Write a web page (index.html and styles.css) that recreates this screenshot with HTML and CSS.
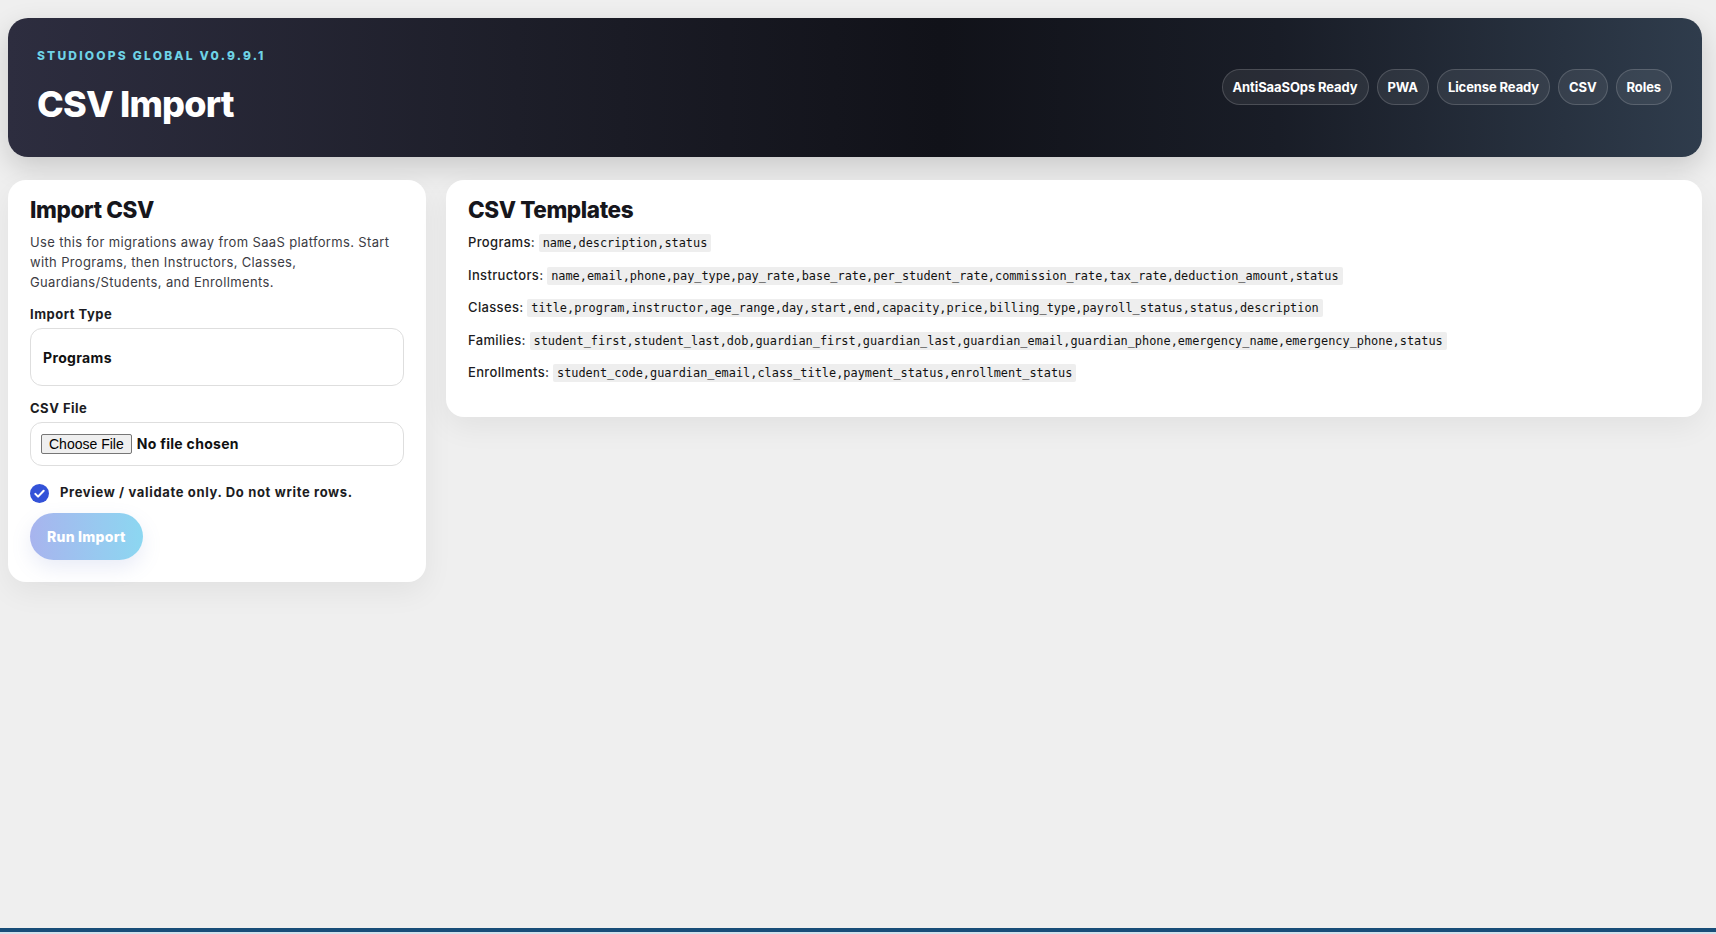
FILE: index.html
```html
<!DOCTYPE html>
<html lang="en">
<head>
    <meta charset="UTF-8">
    <meta name="viewport" content="width=device-width, initial-scale=1.0">
    <title>CSV Import - StudioOps Global</title>
    <link rel="stylesheet" href="styles.css">
</head>
<body>
    <div class="page">
        <header class="hero">
            <div class="hero-title">
                <div class="eyebrow">StudioOps Global v0.9.9.1</div>
                <h1>CSV Import</h1>
            </div>
            <div class="pills">
                <span class="pill">AntiSaaSOps Ready</span>
                <span class="pill">PWA</span>
                <span class="pill">License Ready</span>
                <span class="pill">CSV</span>
                <span class="pill">Roles</span>
            </div>
        </header>

        <main class="grid">
            <section class="card import-card">
                <h2>Import CSV</h2>
                <p class="muted">Use this for migrations away from SaaS platforms. Start with Programs, then Instructors, Classes, Guardians/Students, and Enrollments.</p>
                <form id="importForm">
                    <label class="field-label" for="importType">Import Type</label>
                    <select id="importType" class="field">
                        <option>Programs</option>
                        <option>Instructors</option>
                        <option>Classes</option>
                        <option>Families</option>
                        <option>Enrollments</option>
                    </select>

                    <label class="field-label" for="csvFile">CSV File</label>
                    <div class="field file-field">
                        <input type="file" id="csvFile" accept=".csv">
                    </div>

                    <label class="check-row">
                        <span class="check">
                            <svg viewBox="0 0 20 20" width="19" height="19">
                                <circle cx="10" cy="10" r="10" fill="#3352d8"/>
                                <path d="M5.6 10.4l2.9 2.9 5.9-6.2" fill="none" stroke="#fff" stroke-width="2.2" stroke-linecap="round" stroke-linejoin="round"/>
                            </svg>
                        </span>
                        Preview / validate only. Do not write rows.
                    </label>

                    <button type="submit" class="btn" disabled>Run Import</button>
                </form>
            </section>

            <section class="card templates">
                <h2>CSV Templates</h2>
                <p><span class="tpl-name">Programs:</span> <code>name,description,status</code></p>
                <p><span class="tpl-name">Instructors:</span> <code>name,email,phone,pay_type,pay_rate,base_rate,per_student_rate,commission_rate,tax_rate,deduction_amount,status</code></p>
                <p><span class="tpl-name">Classes:</span> <code>title,program,instructor,age_range,day,start,end,capacity,price,billing_type,payroll_status,status,description</code></p>
                <p><span class="tpl-name">Families:</span> <code>student_first,student_last,dob,guardian_first,guardian_last,guardian_email,guardian_phone,emergency_name,emergency_phone,status</code></p>
                <p><span class="tpl-name">Enrollments:</span> <code>student_code,guardian_email,class_title,payment_status,enrollment_status</code></p>
            </section>
        </main>
    </div>
    <div class="taskbar"><span class="taskbar-tab"></span></div>
</body>
</html>
```

FILE: styles.css
```css
html, body {
    height: 100%;
}

body {
    font-family: 'Inter', 'Liberation Sans', sans-serif;
    margin: 0;
    padding: 0;
    background-color: #efefef;
    color: #1c1c22;
    display: flex;
    flex-direction: column;
}

.page {
    flex: 1;
    padding: 18px 14px 0 8px;
}

/* header */
.hero {
    display: flex;
    align-items: center;
    justify-content: space-between;
    height: 139px;
    box-sizing: border-box;
    padding: 0 30px 0 29px;
    border-radius: 20px;
    background: linear-gradient(90deg, #2d2d3f 0%, #1d1e29 30%, #111219 55%, #191d27 75%, #2f3c4c 100%);
    box-shadow: 0 10px 28px rgba(0,0,0,0.16);
}

.hero-title {
    padding-bottom: 4px;
}

.eyebrow {
    color: #6fd3e6;
    font-size: 12px;
    font-weight: 800;
    letter-spacing: 2.2px;
    text-transform: uppercase;
    line-height: 16px;
    margin-top: 2px;
}

.hero h1 {
    color: #fff;
    font-size: 36px;
    font-weight: 800;
    letter-spacing: -0.8px;
    line-height: 44px;
    margin: 18px 0 0;
}

.pills {
    display: flex;
    gap: 8px;
    margin-bottom: 2px;
}

.pill {
    display: inline-flex;
    align-items: center;
    height: 36px;
    box-sizing: border-box;
    padding: 0 10px;
    border-radius: 18px;
    border: 1px solid rgba(255,255,255,0.16);
    background-color: rgba(255,255,255,0.07);
    color: #fff;
    font-size: 13px;
    font-weight: 700;
    letter-spacing: -0.1px;
}

/* cards */
.grid {
    display: grid;
    grid-template-columns: 418px 1fr;
    gap: 20px;
    align-items: start;
    margin-top: 23px;
}

.card {
    background-color: #fff;
    border-radius: 18px;
    padding: 16px 22px 22px;
    box-shadow: 0 10px 30px rgba(0,0,0,0.06);
}

.card h2 {
    margin: 0 0 8px;
    font-size: 22.5px;
    font-weight: 800;
    letter-spacing: -0.4px;
    line-height: 28px;
    color: #16161c;
}

.muted {
    margin: 0;
    font-size: 13px;
    letter-spacing: 0.35px;
    line-height: 20px;
    color: #3c3c44;
}

.field-label {
    display: block;
    font-size: 13px;
    font-weight: 700;
    letter-spacing: 0.5px;
    line-height: 18px;
    color: #1c1c22;
    margin: 13px 0 5px;
}

.field {
    display: block;
    width: 100%;
    box-sizing: border-box;
    border: 1px solid #dedede;
    border-radius: 12px;
    background-color: #fff;
}

select.field {
    -webkit-appearance: none;
    appearance: none;
    height: 58px;
    padding: 0 12px;
    font-family: inherit;
    font-size: 14px;
    font-weight: 700;
    letter-spacing: 0.35px;
    color: #111;
}

.file-field {
    height: 44px;
    padding: 0 10px;
    display: flex;
    align-items: center;
}

.file-field input {
    font-family: inherit;
    font-size: 14px;
    font-weight: 700;
    letter-spacing: 0.3px;
    color: #111;
}

.file-field input::file-selector-button {
    font-family: 'Liberation Sans', Arial, sans-serif;
    font-size: 14px;
    font-weight: 400;
    letter-spacing: 0;
    padding: 1px 7px;
    margin-right: 5px;
    border: 1px solid #767676;
    border-radius: 2px;
    background-color: #efefef;
    color: #000;
}

.check-row {
    display: flex;
    align-items: center;
    gap: 11px;
    margin-top: 14px;
    font-size: 13px;
    font-weight: 700;
    letter-spacing: 0.65px;
    color: #1c1c22;
    line-height: 20px;
}

.check {
    display: flex;
    padding-top: 4px;
}

.btn {
    margin-top: 10px;
    height: 47px;
    padding: 0 17px;
    border: none;
    border-radius: 24px;
    background: linear-gradient(90deg, #a8b4ee 0%, #8cd7f1 100%);
    color: #fff;
    font-family: inherit;
    font-size: 14px;
    font-weight: 800;
    letter-spacing: 0.25px;
    box-shadow: 0 8px 20px rgba(110,130,200,0.15);
    cursor: not-allowed;
}

/* templates */
.templates {
    padding-bottom: 34px;
}

.templates p {
    margin: 0 0 11.5px;
    font-size: 13px;
    line-height: 20px;
    color: #1c1c22;
}

.templates p:last-child {
    margin-bottom: 0;
}

.tpl-name {
    font-weight: 500;
    letter-spacing: 0.35px;
}

code {
    font-family: 'DejaVu Sans Mono', 'Liberation Mono', monospace;
    font-size: 11.9px;
    background-color: #eeeeee;
    padding: 2px 4px;
    border-radius: 2px;
    color: #111;
}

/* bottom edge */
.taskbar {
    height: 4px;
    background-color: #184d78;
    border-bottom: 2px solid #d3e0ea;
    display: flex;
}

.taskbar-tab {
    width: 45px;
    margin-left: 213px;
}
```
